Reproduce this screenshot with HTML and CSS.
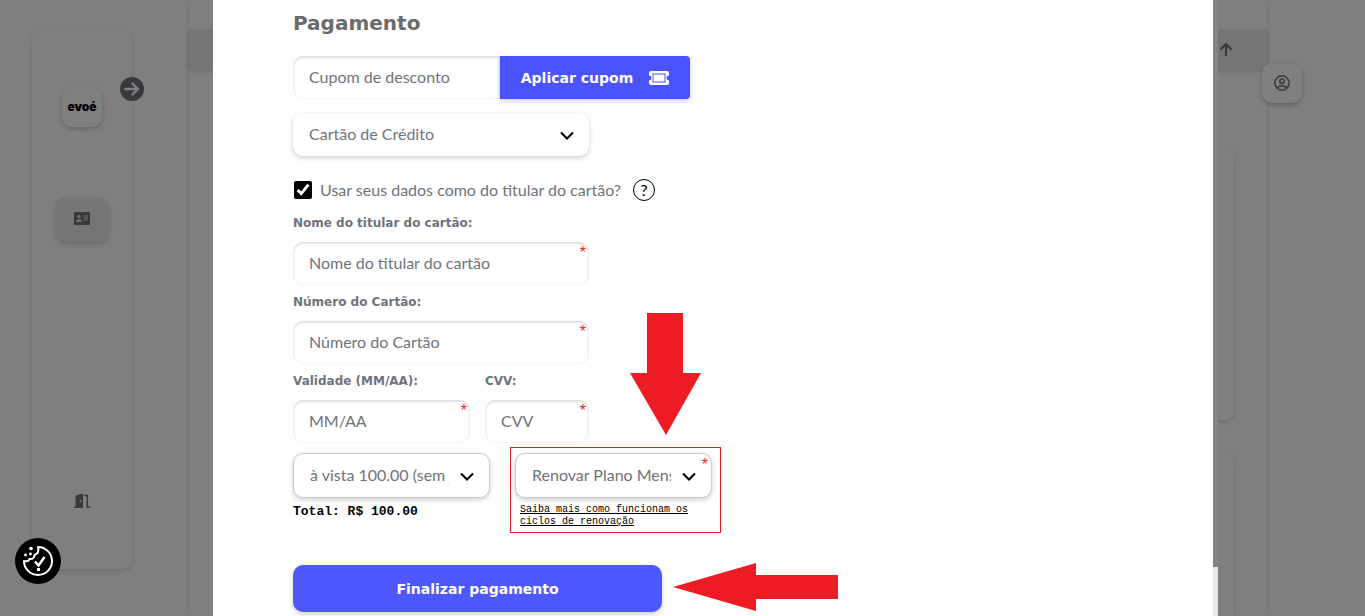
FILE: index.html
```html
<!DOCTYPE html>
<html lang="pt-BR">
<head>
  <meta charset="UTF-8" />
  <meta name="viewport" content="width=device-width, initial-scale=1.0"/>
  <title>Pagamento | evoé</title>
  <link rel="stylesheet" href="styles.css">
</head>
<body>
  <div class="page">
    <nav class="sidebar">
      <button type="button" class="sidebar-toggle" aria-label="Expandir menu">
        <svg viewBox="0 0 24 24" width="24" height="24">
          <circle cx="12" cy="12" r="12" fill="#70707a"/>
          <path d="M5.500 12H18M12.500 6.500L18 12l-5.500 5.500" fill="none" stroke="#fff" stroke-width="2.400" stroke-linecap="round" stroke-linejoin="round"/>
        </svg>
      </button>
      <a href="#" class="logo">evoé</a>
      <a href="#" class="nav-item" aria-label="Meus dados">
        <svg viewBox="0 0 16 13" width="16" height="13">
          <rect width="16" height="13" rx="1" fill="#70707a"/>
          <circle cx="5" cy="4.500" r="1.700" fill="#ddd"/>
          <path d="M2 10c0-2 1.300-3 3-3s3 1 3 3z" fill="#ddd"/>
          <path d="M9.500 4H14M9.500 6H14M9.500 8H14" stroke="#ddd" stroke-width="1"/>
        </svg>
      </a>
      <a href="#" class="nav-exit" aria-label="Sair">
        <svg viewBox="0 0 16 16" width="16" height="16">
          <path d="M1.500 2.500L9 .5V15H0v-1.300h1.500z" fill="#70707a"/>
          <path d="M10 2.500h3.300v11.700H16" fill="none" stroke="#70707a" stroke-width="1.500"/>
          <circle cx="6.700" cy="8" r=".9" fill="#fff"/>
        </svg>
      </a>
    </nav>

    <main class="panel">
      <div class="topbar">
        <svg viewBox="0 0 14 14" width="14" height="14">
          <path d="M7 13V1.500M1.500 6.500L7 1.200l5.500 5.300" fill="none" stroke="#70707a" stroke-width="2.200"/>
        </svg>
      </div>
      <div class="card"></div>
      <div class="card card-last"></div>
    </main>

    <button type="button" class="user-btn" aria-label="Minha conta">
      <svg viewBox="0 0 16 16" width="16" height="16" fill="none" stroke="#70707a" stroke-width="1.500">
        <circle cx="8" cy="8" r="7.200"/>
        <circle cx="8" cy="6.300" r="2.200"/>
        <path d="M3.300 13c1-1.600 2.700-2.300 4.700-2.300s3.700.7 4.700 2.300"/>
      </svg>
    </button>
  </div>

  <div class="overlay">
    <div class="modal">
      <form class="payment">
        <h1>Pagamento</h1>

        <div class="coupon">
          <input type="text" id="cupom" placeholder="Cupom de desconto" aria-label="Cupom de desconto">
          <button type="button" class="btn-coupon">
            Aplicar cupom
            <svg viewBox="0 0 20 14" width="20" height="14">
              <path d="M2 0h16a2 2 0 0 1 2 2v2.500a2.500 2.500 0 0 0 0 5V12a2 2 0 0 1-2 2H2a2 2 0 0 1-2-2V9.500a2.500 2.500 0 0 0 0-5V2a2 2 0 0 1 2-2z" fill="#fff"/>
              <rect x="4" y="3" width="12" height="8" fill="#fff" stroke="#4b53ff" stroke-width="1"/>
            </svg>
          </button>
        </div>

        <div class="select-box method">
          <select id="metodo" aria-label="Forma de pagamento">
            <option>Cartão de Crédito</option>
          </select>
          <svg viewBox="0 0 14 9" width="14" height="9"><path d="M1 1.500l6 6 6-6"/></svg>
        </div>

        <div class="holder">
          <input type="checkbox" id="titular" checked>
          <label for="titular">Usar seus dados como do titular do cartão?</label>
          <button type="button" class="help" aria-label="Ajuda">?</button>
        </div>

        <div class="fields">
          <div class="field field-full">
            <label for="nome">Nome do titular do cartão:</label>
            <div class="required"><input type="text" id="nome" placeholder="Nome do titular do cartão"></div>
          </div>
          <div class="field field-full">
            <label for="numero">Número do Cartão:</label>
            <div class="required"><input type="text" id="numero" placeholder="Número do Cartão"></div>
          </div>
          <div class="field">
            <label for="validade">Validade (MM/AA):</label>
            <div class="required"><input type="text" id="validade" placeholder="MM/AA"></div>
          </div>
          <div class="field">
            <label for="cvv">CVV:</label>
            <div class="required"><input type="text" id="cvv" placeholder="CVV"></div>
          </div>
        </div>

        <div class="plans">
          <div class="installments">
            <div class="select-box bordered">
              <select id="parcelas" aria-label="Parcelas">
                <option>à vista 100.00 (sem juros)</option>
              </select>
              <svg viewBox="0 0 14 9" width="14" height="9"><path d="M1 1.500l6 6 6-6"/></svg>
            </div>
            <p class="total">Total: R$ 100.00</p>
          </div>
          <div class="renewal">
            <div class="select-box bordered required">
              <select id="renovacao" aria-label="Renovação">
                <option>Renovar Plano Mensalmente</option>
              </select>
              <svg viewBox="0 0 14 9" width="14" height="9"><path d="M1 1.500l6 6 6-6"/></svg>
            </div>
            <a href="#" class="more">Saiba mais como funcionam os ciclos de renovação</a>
          </div>
          <svg class="arrow arrow-down" viewBox="0 0 72 122" width="72" height="122">
            <path d="M17 0h36v60h18L36 122 0 60h17z" fill="#ed1c24"/>
          </svg>
        </div>

        <div class="actions">
          <button type="submit" class="btn-submit">Finalizar pagamento</button>
          <svg class="arrow arrow-left" viewBox="0 0 165 48" width="165" height="48">
            <path d="M0 24L83 0v12h82v24H83v12z" fill="#ed1c24"/>
          </svg>
        </div>
      </form>
      <div class="scroll"><div class="thumb"></div></div>
    </div>
  </div>

  <button type="button" class="cookies" aria-label="Preferências de cookies">
    <svg viewBox="0 0 46 46" width="46" height="46">
      <circle cx="23" cy="23" r="23" fill="#000"/>
      <path d="M23 9a14 14 0 1 1-14 14c3.500 1 5-.5 5.500-2 3 .5 5-1 5-4 3-1 4.500-4 3.500-8z" fill="none" stroke="#fff" stroke-width="2" stroke-linejoin="round"/>
      <path d="M20 23.500l3.500 4 6-8.500" fill="none" stroke="#fff" stroke-width="2.500"/>
      <path d="M22 30h3v3h-3z" fill="#fff"/>
      <circle cx="16" cy="10.500" r="1.800" fill="#fff"/>
      <circle cx="10.500" cy="17" r="1.400" fill="#fff"/>
      <circle cx="15.500" cy="16" r="1.400" fill="#fff"/>
    </svg>
  </button>
</body>
</html>
```
FILE: styles.css
```css
* {
  box-sizing: border-box;
}

html, body {
  height: 100%;
  margin: 0;
  font-family: Lato, 'Open Sans', sans-serif;
  background: #fff;
}

button, input, select {
  font-family: inherit;
}

button {
  border: none;
  padding: 0;
  cursor: pointer;
}

svg {
  display: block;
}

/* page behind the modal */
.page {
  display: flex;
  align-items: flex-start;
  height: 100%;
}

.sidebar {
  position: relative;
  display: flex;
  flex-direction: column;
  align-items: center;
  width: 100px;
  height: calc(100vh - 77px);
  margin: 30px 57px 0 32px;
  padding: 57px 0 60px;
  border-radius: 10px;
  box-shadow: 0 2px 5px rgba(0,0,0,0.15);
}

.sidebar-toggle {
  position: absolute;
  top: 47px;
  right: -12px;
  background: none;
}

.logo {
  width: 40px;
  height: 40px;
  border-radius: 10px;
  box-shadow: 0 2px 5px rgba(0,0,0,0.2);
  font: 900 12px/40px Inter, sans-serif;
  color: #000;
  text-align: center;
  text-decoration: none;
}

.nav-item {
  display: flex;
  justify-content: center;
  width: 53px;
  height: 45px;
  margin-top: 70px;
  padding-top: 15px;
  border-radius: 10px;
  background: #eaeaea;
  box-shadow: 0 2px 5px rgba(0,0,0,0.2);
}

.nav-exit {
  margin-top: auto;
}

.panel {
  display: flex;
  flex-direction: column;
  flex: 1;
  height: 100%;
  padding-top: 30px;
  box-shadow: 0 0 5px rgba(0,0,0,0.15);
}

.topbar {
  display: flex;
  justify-content: flex-end;
  height: 39px;
  padding: 13px 34px 0 0;
  background: #eaeaea;
  box-shadow: 0 2px 5px rgba(0,0,0,0.15);
}

.card {
  height: 274px;
  margin: 77px 33px 31px;
  border-radius: 10px;
  box-shadow: 0 2px 5px rgba(0,0,0,0.15);
}

.card-last {
  flex: 1;
  margin-top: 0;
  margin-bottom: 0;
  border-radius: 10px 10px 0 0;
}

.user-btn {
  display: flex;
  align-items: center;
  justify-content: center;
  width: 40px;
  height: 40px;
  margin: 63px 63px 0 -5px;
  border-radius: 10px;
  background: #fff;
  box-shadow: 0 2px 5px rgba(0,0,0,0.25);
  z-index: 1;
}

/* modal */
.overlay {
  position: fixed;
  inset: 0;
  z-index: 2;
  padding: 0 147px 0 213px;
  background: rgba(0,0,0,0.5);
}

.modal {
  display: flex;
  height: 100%;
  background: #fff;
}

.payment {
  flex: 1;
  padding: 10px 80px 0;
  overflow: hidden;
}

.scroll {
  width: 5px;
  background: #e8e8e8;
}

.thumb {
  height: 92%;
  background: #858585;
}

h1 {
  margin: 0 0 20px;
  font: bold 20px/26px 'DejaVu Sans', sans-serif;
  color: #6b6b6b;
}

input[type="text"] {
  display: block;
  width: 100%;
  height: 43px;
  padding: 0 16px 2px;
  border: none;
  border-radius: 10px;
  box-shadow: inset 0 1px 3px rgba(0,0,0,0.2);
  font-size: 16px;
}

input::placeholder {
  color: #70737c;
  opacity: 1;
}

.coupon {
  display: flex;
  width: 397px;
  margin-bottom: 14px;
}

.coupon input[type="text"] {
  flex: 1;
  min-width: 0;
  border-radius: 10px 0 0 10px;
}

.btn-coupon {
  display: flex;
  align-items: center;
  justify-content: center;
  gap: 16px;
  width: 190px;
  border-radius: 0 4px 4px 0;
  background: #4b53ff;
  box-shadow: 0 2px 5px rgba(0,0,0,0.2);
  color: #fff;
  font: bold 14px 'DejaVu Sans', sans-serif;
}

.select-box {
  position: relative;
  height: 43px;
  border-radius: 10px;
  background: #fff;
  box-shadow: 0 2px 5px rgba(0,0,0,0.2);
}

.select-box select {
  width: 100%;
  height: 100%;
  padding: 0 40px 2px 16px;
  border: none;
  border-radius: 10px;
  background: none;
  appearance: none;
  color: #70737c;
  font-size: 16px;
}

.select-box svg {
  position: absolute;
  top: 50%;
  right: 15px;
  margin-top: -4px;
  fill: none;
  stroke: #000;
  stroke-width: 2;
  pointer-events: none;
}

.method {
  width: 296px;
  margin-bottom: 22px;
}

.bordered {
  height: 45px;
  border: 1px solid #ccc;
}

.holder {
  display: flex;
  align-items: center;
  height: 24px;
  margin-bottom: 12px;
  color: #70737c;
  font-size: 16px;
}

.holder input {
  width: 18px;
  height: 18px;
  margin: 0 8px 0 1px;
  accent-color: #000;
}

.holder label {
  padding-bottom: 2px;
}

.help {
  width: 22px;
  height: 22px;
  margin-left: 12px;
  border: 1px solid #000;
  border-radius: 50%;
  background: #fff;
  color: #000;
  font-size: 16px;
  line-height: 20px;
}

.fields {
  display: grid;
  grid-template-columns: 177px 104px;
  column-gap: 15px;
  row-gap: 8px;
}

.field-full {
  grid-column: 1 / -1;
}

.field label {
  display: block;
  height: 28px;
  font: bold 12px/18px 'DejaVu Sans', sans-serif;
  color: #70737c;
}

.required {
  position: relative;
}

.required::after {
  content: "*";
  position: absolute;
  top: 1px;
  right: 3px;
  color: #ed1c24;
  font: 16px/20px 'Liberation Sans', sans-serif;
}

.plans {
  position: relative;
  display: flex;
  align-items: flex-start;
  gap: 20px;
  margin-top: 4px;
}

.installments {
  width: 197px;
  padding-top: 6px;
}

.total {
  margin: 4px 0 0;
  color: #000;
  font: bold 13px/20px 'Liberation Mono', monospace;
}

.renewal {
  width: 211px;
  height: 86px;
  padding: 5px 8px 0 4px;
  border: 1px solid #ed1c24;
}

.more {
  display: block;
  width: 180px;
  margin: 6px 0 0 5px;
  color: #000;
  font: 10px/12px 'Liberation Mono', monospace;
}

.actions {
  position: relative;
  margin-top: 32px;
}

.btn-submit {
  width: 369px;
  height: 47px;
  border-radius: 10px;
  background: #4f57ff;
  box-shadow: 0 2px 5px rgba(0,0,0,0.2);
  color: #fff;
  font: bold 14px 'DejaVu Sans', sans-serif;
}

/* callouts over the form */
.arrow {
  position: absolute;
}

.arrow-down {
  left: 337px;
  bottom: 98px;
}

.arrow-left {
  left: 380px;
  top: -2px;
}

.cookies {
  position: fixed;
  left: 15px;
  bottom: 32px;
  z-index: 3;
  border-radius: 50%;
  background: none;
}
```
